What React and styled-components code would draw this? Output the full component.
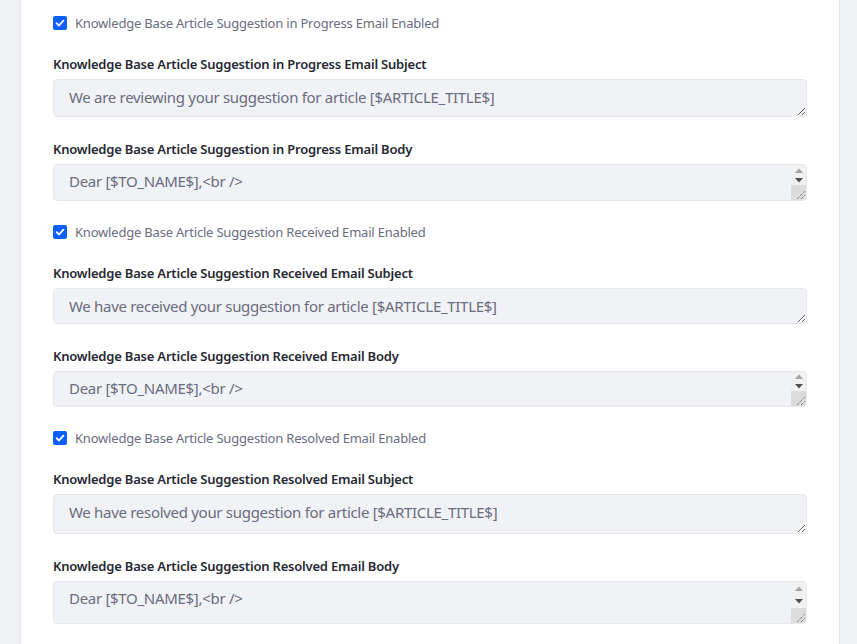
import styled, { createGlobalStyle } from "styled-components";

const GlobalStyle = createGlobalStyle`
  html, body {
    margin: 0;
    padding: 0;
    background: #f1f2f5;
  }
  body {
    font-family: "Noto Sans", "Liberation Sans", sans-serif;
    color: #272833;
  }
`;

const Page = styled.div`
  padding: 0 17px 0 20px;
`;

const Card = styled.section`
  background: #ffffff;
  border: 1px solid #e7e7ed;
  border-top: 0;
  padding: 14px 32px 40px;
`;

const CheckGroup = styled.label`
  display: flex;
  align-items: center;
  gap: 8px;
  height: 21px;
  margin: -2px 0 21px;
  font-size: 13px;
  letter-spacing: -0.2px;
  color: #6b6c7e;
  cursor: pointer;
`;

const Box = styled.span`
  width: 14px;
  height: 14px;
  border-radius: 2px;
  background: #0b5fff;
  display: flex;
  align-items: center;
  justify-content: center;
  flex-shrink: 0;
`;

const FormGroup = styled.div`
  margin-bottom: 22px;
`;

const Label = styled.div`
  font-size: 13px;
  font-weight: 600;
  letter-spacing: -0.2px;
  line-height: 21px;
  margin-bottom: 4px;
  color: #272833;
`;

const Field = styled.div`
  position: relative;
`;

const TextArea = styled.textarea`
  display: block;
  box-sizing: border-box;
  width: 100%;
  height: ${(p) => p.$h}px;
  padding: ${(p) => (p.$body ? "4px" : "5px")} 15px 6px;
  border: 1px solid #e7e7ed;
  border-radius: 4px;
  background: #f1f2f5;
  color: #6b6c7e;
  font-family: "Noto Sans", "Liberation Sans", sans-serif;
  font-size: 15px;
  letter-spacing: -0.3px;
  line-height: 24px;
  resize: vertical;
  overflow: hidden;
  outline: none;
`;

/* native-looking scrollbar drawn over the body textareas */
const ScrollBar = styled.div`
  position: absolute;
  top: 1px;
  right: 1px;
  bottom: 1px;
  width: 15px;
  display: flex;
  flex-direction: column;
  background: #f1f1f1;
  border-radius: 0 3px 3px 0;
  overflow: hidden;
  pointer-events: none;
`;

const Arrow = styled.div`
  flex: 1;
  display: flex;
  align-items: center;
  justify-content: center;
`;

const Corner = styled.div`
  height: 15px;
  background: #dcdcdc;
  display: flex;
  align-items: flex-end;
  justify-content: flex-end;
`;

const Check = () => (
  <Box>
    <svg width="10" height="10" viewBox="0 0 10 10">
      <path d="M1.6 5.2 L4 7.5 L8.4 2.6" fill="none" stroke="#fff" strokeWidth="1.8" strokeLinecap="round" strokeLinejoin="round" />
    </svg>
  </Box>
);

const FakeScroll = () => (
  <ScrollBar>
    <Arrow>
      <svg width="8" height="5" viewBox="0 0 8 5">
        <path d="M0 5 L4 0.5 L8 5 Z" fill="#a3a3a3" />
      </svg>
    </Arrow>
    <Arrow>
      <svg width="8" height="5" viewBox="0 0 8 5">
        <path d="M0 0 L8 0 L4 4.5 Z" fill="#505050" />
      </svg>
    </Arrow>
    <Corner>
      <svg width="12" height="12" viewBox="0 0 12 12">
        <path d="M3 11 L11 3 M7 11 L11 7" stroke="#555" strokeWidth="1" strokeDasharray="1 1" />
      </svg>
    </Corner>
  </ScrollBar>
);

const body = (action) =>
  `Dear [$TO_NAME$],<br />\n\n${action}<br />\n<br />\nSincerely,<br />\n[$FROM_NAME$]<br />\n[$FROM_ADDRESS$]`;

const sections = [
  {
    state: "in Progress",
    subject: "We are reviewing your suggestion for article [$ARTICLE_TITLE$]",
    action: "Your suggestion for article [$ARTICLE_TITLE$] is being reviewed.",
    subjectH: 38,
    bodyH: 37,
  },
  {
    state: "Received",
    subject: "We have received your suggestion for article [$ARTICLE_TITLE$]",
    action: "Your suggestion for article [$ARTICLE_TITLE$] has been received.",
    subjectH: 36,
    bodyH: 36,
  },
  {
    state: "Resolved",
    subject: "We have resolved your suggestion for article [$ARTICLE_TITLE$]",
    action: "Your suggestion for article [$ARTICLE_TITLE$] has been resolved.",
    subjectH: 40,
    bodyH: 43,
  },
];

export default function App() {
  return (
    <Page>
      <GlobalStyle />
      <Card>
        {sections.map((s) => (
          <div key={s.state}>
            <CheckGroup>
              <Check />
              Knowledge Base Article Suggestion {s.state} Email Enabled
            </CheckGroup>
            <FormGroup>
              <Label>Knowledge Base Article Suggestion {s.state} Email Subject</Label>
              <TextArea $h={s.subjectH} defaultValue={s.subject} />
            </FormGroup>
            <FormGroup>
              <Label>Knowledge Base Article Suggestion {s.state} Email Body</Label>
              <Field>
                <TextArea $body $h={s.bodyH} defaultValue={body(s.action)} />
                <FakeScroll />
              </Field>
            </FormGroup>
          </div>
        ))}
      </Card>
    </Page>
  );
}
